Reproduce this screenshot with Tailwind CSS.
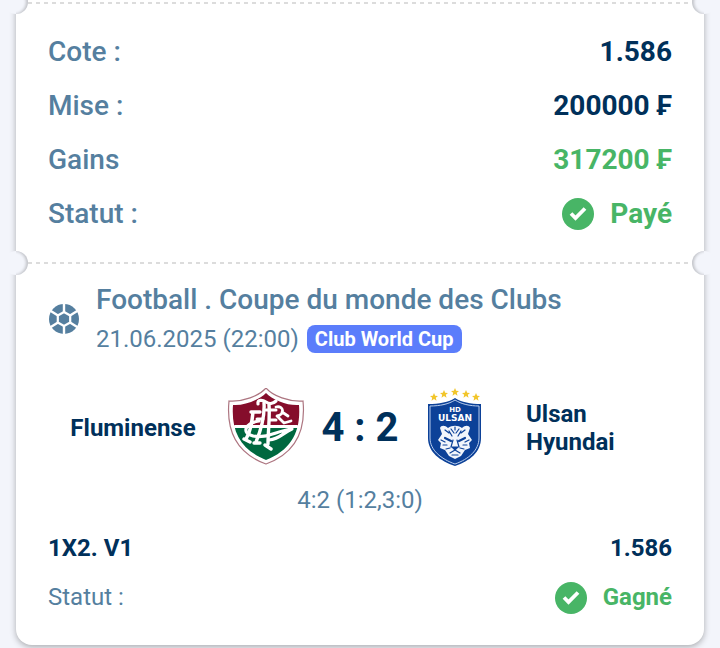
<!DOCTYPE html>
<html lang="fr">
<head>
    <meta charset="UTF-8">
    <meta name="viewport" content="width=device-width, initial-scale=1.0">
    <title>Coupon</title>
    <script src="https://cdn.jsdelivr.net/npm/@tailwindcss/browser@4"></script>
</head>
<body class="bg-[#f3f5fb] font-['Roboto',sans-serif] text-[#00305a] overflow-x-hidden">
    <main class="px-4 pb-[3px]">
        <div class="bg-white rounded-b-2xl shadow-[0_2px_6px_rgba(0,0,0,0.3)]">

            <!-- Coupon summary -->
            <section class="relative pt-[2px]">
                <div class="absolute -left-3 -top-[10px] size-6 rounded-full bg-[#f3f5fb]"></div>
                <div class="absolute left-0 -top-[10px] flex h-6 w-3 justify-end overflow-hidden">
                    <div class="size-6 shrink-0 rounded-full bg-[#f3f5fb] shadow-[inset_-2px_0_3px_rgba(0,0,0,0.2)]"></div>
                </div>
                <div class="absolute -right-3 -top-[10px] size-6 rounded-full bg-[#f3f5fb]"></div>
                <div class="absolute right-0 -top-[10px] flex h-6 w-3 overflow-hidden">
                    <div class="size-6 shrink-0 rounded-full bg-[#f3f5fb] shadow-[inset_2px_0_3px_rgba(0,0,0,0.2)]"></div>
                </div>
                <div class="mx-3 h-[2px] bg-[repeating-linear-gradient(90deg,#dcdcdc_0_4px,transparent_4px_8px)]"></div>
                <dl class="px-8 pt-[21px] pb-[21px] text-[28px] leading-[54px]">
                    <div class="flex justify-between">
                        <dt class="font-medium text-[#557f9f]">Cote :</dt>
                        <dd class="font-bold">1.586</dd>
                    </div>
                    <div class="flex justify-between">
                        <dt class="font-medium text-[#557f9f]">Mise :</dt>
                        <dd class="font-bold">200000 ₣</dd>
                    </div>
                    <div class="flex justify-between">
                        <dt class="font-medium text-[#557f9f]">Gains</dt>
                        <dd class="font-bold text-[#48b566]">317200 ₣</dd>
                    </div>
                    <div class="flex justify-between">
                        <dt class="font-medium text-[#557f9f]">Statut :</dt>
                        <dd class="flex items-center gap-4 font-bold text-[#48b566]">
                            <svg class="size-8" viewBox="0 0 32 32" fill="none"><circle cx="16" cy="16" r="16" fill="#48b566"/><path d="M9 15.5l4.5 4.5L23 10.5" stroke="#fff" stroke-width="3.8"/></svg>
                            Payé
                        </dd>
                    </div>
                </dl>
            </section>

            <!-- Match -->
            <section class="relative">
                <div class="absolute -left-3 -top-[11px] size-6 rounded-full bg-[#f3f5fb]"></div>
                <div class="absolute left-0 -top-[11px] flex h-6 w-3 justify-end overflow-hidden">
                    <div class="size-6 shrink-0 rounded-full bg-[#f3f5fb] shadow-[inset_-2px_0_3px_rgba(0,0,0,0.2)]"></div>
                </div>
                <div class="absolute -right-3 -top-[11px] size-6 rounded-full bg-[#f3f5fb]"></div>
                <div class="absolute right-0 -top-[11px] flex h-6 w-3 overflow-hidden">
                    <div class="size-6 shrink-0 rounded-full bg-[#f3f5fb] shadow-[inset_2px_0_3px_rgba(0,0,0,0.2)]"></div>
                </div>
                <div class="mx-3 h-[2px] bg-[repeating-linear-gradient(90deg,#dcdcdc_0_4px,transparent_4px_8px)]"></div>
                <div class="px-8 pt-4 pb-[23px]">
                    <header class="flex items-center gap-4 text-[#557f9f]">
                        <svg class="size-8 shrink-0" viewBox="0 0 32 32">
                            <circle cx="16" cy="16" r="15" fill="#557f9f"/>
                            <g stroke="#fff">
                                <path d="M16 9l6.2 3.5v7L16 23l-6.2-3.5v-7z" fill="#557f9f" stroke-width="2.2"/>
                                <path d="M16 0v9M16 23v9M22 12.5l8-5M22 19.5l8 5M10 12.5l-8-5M10 19.5l-8 5" stroke-width="2.4"/>
                            </g>
                        </svg>
                        <div>
                            <h1 class="text-[28px] leading-10 font-medium">Football . Coupe du monde des Clubs</h1>
                            <div class="flex items-center gap-2 text-2xl leading-[38px]">
                                <time datetime="2025-06-21T22:00">21.06.2025 (22:00)</time>
                                <span class="rounded-lg bg-[#5b7dfb] px-2 text-xl leading-7 font-bold text-white">Club World Cup</span>
                            </div>
                        </div>
                    </header>

                    <div class="mt-[30px] grid grid-cols-[1fr_80px_108px_80px_1fr] items-center text-2xl leading-7 font-bold">
                        <div class="pr-2 text-center">Fluminense</div>
                        <svg class="h-20 w-20" viewBox="0 0 80 80" role="img" aria-label="Fluminense">
                            <defs>
                                <clipPath id="flu"><path d="M40 5C33 12 18 18 7 17C5 44 15 62 40 72C65 62 75 44 73 17C62 18 47 12 40 5Z"/></clipPath>
                            </defs>
                            <path d="M40 0C33 8 17 14 3 13C0 44 12 66 40 76C68 66 80 44 77 13C63 14 47 8 40 0Z" fill="#fff" stroke="#ad7580" stroke-width="1.2"/>
                            <g clip-path="url(#flu)">
                                <rect width="80" height="38" fill="#850d2b"/>
                                <rect y="40" width="80" height="40" fill="#00683f"/>
                                <rect y="37" width="80" height="3" fill="#fff"/>
                            </g>
                            <g fill="none" stroke="#fff" stroke-linecap="round" stroke-linejoin="round">
                                <path d="M32 16C31 11 37 12 40 14C43 16 47 16 50 13" stroke-width="3.2"/>
                                <path d="M38 15C39 30 35 42 30 54M43 17C44 30 42 44 42 56M28 55H34M39 57L45 61" stroke-width="3.4"/>
                                <path d="M27 24C26 34 25 43 20 51M25 24H34M18 51L24 54" stroke-width="3.4"/>
                                <path d="M40 22H50M31 31H37M44 32H50" stroke-width="3"/>
                                <path d="M50 19C58 17 59 27 51 28L58 35L65 33M56 24L62 28" stroke-width="2.8"/>
                                <path d="M33 33C19 35 15 45 27 48C40 51 50 43 66 41C58 44 54 51 43 52" stroke-width="3.2"/>
                            </g>
                        </svg>
                        <div class="text-center text-[40px] leading-10">4 : 2</div>
                        <svg class="h-20 w-20" viewBox="0 0 80 80" role="img" aria-label="Ulsan Hyundai">
                            <defs>
                                <path id="star" d="M0-4L1.2-1.3 4-1.1 1.8.8 2.5 3.7 0 2.1-2.5 3.7-1.8.8-4-1.1-1.2-1.3z"/>
                            </defs>
                            <g fill="#f2c62b">
                                <use href="#star" x="20" y="9"/>
                                <use href="#star" x="30" y="6"/>
                                <use href="#star" x="41" y="4"/>
                                <use href="#star" x="52" y="6"/>
                                <use href="#star" x="62" y="9"/>
                            </g>
                            <path d="M41 10C35 14 25 16 14 16V50C14 64 26 73 41 78C56 73 67 64 67 50V16C57 16 47 14 41 10Z" fill="#0c4198"/>
                            <path d="M41 12C35 16 26 18 16 18V50C16 62 27 71 41 76C55 71 65 62 65 50V18C56 18 47 16 41 12Z" fill="none" stroke="#b9cdec" stroke-width="1"/>
                            <g class="font-['DejaVu_Sans',sans-serif] font-bold" fill="#fff" text-anchor="middle">
                                <text x="41" y="24" font-size="7">HD</text>
                                <text x="41" y="33" font-size="9">ULSAN</text>
                            </g>
                            <path d="M26 40C27 37 31 37 34 40C38 37 44 37 48 40C51 37 55 37 56 40L54 46L58 52L55 55L56 60L51 62L47 68L41 71L35 68L31 62L26 60L27 55L24 52L28 46Z" fill="#f1f5fb"/>
                            <g fill="none" stroke="#0c4198" stroke-width="1.2" stroke-linecap="round">
                                <path d="M37 41L40 45M45 41L42 45M41 39V42M31 42L35 45M51 42L47 45M35 43L38 48M47 43L44 48"/>
                                <path d="M31 50L37 53M51 50L45 53" stroke-width="2.2"/>
                                <path d="M27 52L31 54M29 57L33 57M55 52L51 54M53 57L49 57M39 52L37 59M43 52L45 59M32 61L36 60M50 61L46 60"/>
                                <path d="M38 59H44L41 62ZM41 62L36 65M41 62L46 65M38 67H44" fill="#0c4198"/>
                            </g>
                        </svg>
                        <div class="pl-8">Ulsan Hyundai</div>
                    </div>

                    <p class="mt-3 text-center text-2xl leading-10 text-[#557f9f]">4:2 (1:2,3:0)</p>

                    <dl class="mt-1 text-2xl leading-[49px]">
                        <div class="flex justify-between font-bold">
                            <dt>1X2. V1</dt>
                            <dd>1.586</dd>
                        </div>
                        <div class="flex justify-between">
                            <dt class="text-[#557f9f]">Statut :</dt>
                            <dd class="flex items-center gap-4 font-bold text-[#48b566]">
                                <svg class="size-8" viewBox="0 0 32 32" fill="none"><circle cx="16" cy="16" r="16" fill="#48b566"/><path d="M9 15.5l4.5 4.5L23 10.5" stroke="#fff" stroke-width="3.8"/></svg>
                                Gagné
                            </dd>
                        </div>
                    </dl>
                </div>
            </section>
        </div>
    </main>
</body>
</html>
